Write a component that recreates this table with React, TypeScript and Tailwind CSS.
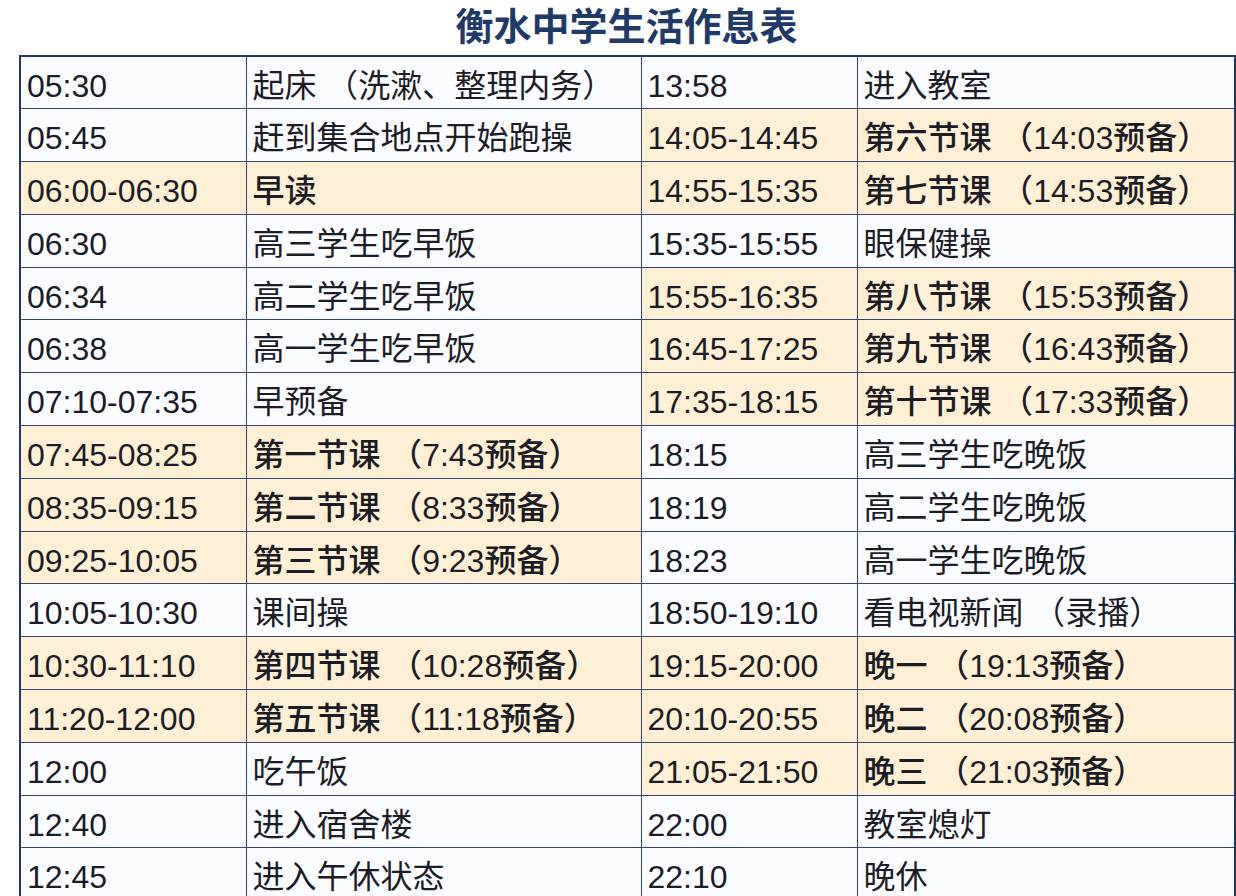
import React from "react";

type Row = { t: string; d: string; h?: boolean };

const left: Row[] = [
  { t: "05:30", d: "起床（洗漱、整理内务）" },
  { t: "05:45", d: "赶到集合地点开始跑操" },
  { t: "06:00-06:30", d: "早读", h: true },
  { t: "06:30", d: "高三学生吃早饭" },
  { t: "06:34", d: "高二学生吃早饭" },
  { t: "06:38", d: "高一学生吃早饭" },
  { t: "07:10-07:35", d: "早预备" },
  { t: "07:45-08:25", d: "第一节课（7:43预备）", h: true },
  { t: "08:35-09:15", d: "第二节课（8:33预备）", h: true },
  { t: "09:25-10:05", d: "第三节课（9:23预备）", h: true },
  { t: "10:05-10:30", d: "课间操" },
  { t: "10:30-11:10", d: "第四节课（10:28预备）", h: true },
  { t: "11:20-12:00", d: "第五节课（11:18预备）", h: true },
  { t: "12:00", d: "吃午饭" },
  { t: "12:40", d: "进入宿舍楼" },
  { t: "12:45", d: "进入午休状态" },
];

const right: Row[] = [
  { t: "13:58", d: "进入教室" },
  { t: "14:05-14:45", d: "第六节课（14:03预备）", h: true },
  { t: "14:55-15:35", d: "第七节课（14:53预备）", h: true },
  { t: "15:35-15:55", d: "眼保健操" },
  { t: "15:55-16:35", d: "第八节课（15:53预备）", h: true },
  { t: "16:45-17:25", d: "第九节课（16:43预备）", h: true },
  { t: "17:35-18:15", d: "第十节课（17:33预备）", h: true },
  { t: "18:15", d: "高三学生吃晚饭" },
  { t: "18:19", d: "高二学生吃晚饭" },
  { t: "18:23", d: "高一学生吃晚饭" },
  { t: "18:50-19:10", d: "看电视新闻（录播）" },
  { t: "19:15-20:00", d: "晚一（19:13预备）", h: true },
  { t: "20:10-20:55", d: "晚二（20:08预备）", h: true },
  { t: "21:05-21:50", d: "晚三（21:03预备）", h: true },
  { t: "22:00", d: "教室熄灯" },
  { t: "22:10", d: "晚休" },
];

const font = {
  fontFamily: '"Liberation Sans", "Noto Sans CJK SC", sans-serif',
};

function Text({ s }: { s: string }) {
  const parts = s.split(/([（])/);
  return (
    <>
      {parts.map((p, i) =>
        p === "（" ? (
          <span key={i} className="pl-[0.3em]">（</span>
        ) : (
          <React.Fragment key={i}>{p}</React.Fragment>
        )
      )}
    </>
  );
}

function Cell({ children, h, bold, w }: { children: React.ReactNode; h?: boolean; bold?: boolean; w: string }) {
  return (
    <td
      className={`${w} ${h ? "bg-[#fdf0d4]" : "bg-[#fbfcff]"} ${bold ? "font-medium" : "font-normal"} border-[1.5px] border-[#34466f] pl-[6px] pt-[6px] align-middle text-[32px] leading-none text-[#1c1c26] whitespace-nowrap`}
    >
      {children}
    </td>
  );
}

export default function App() {
  return (
    <div className="w-[1236px] h-[896px] overflow-hidden bg-white" style={font}>
      <div className="pl-[19px]">
        <div
          className="w-[1215px] h-[55px] pt-[2px] text-center text-[38px] font-bold text-[#1f3a68] leading-[44px]"
          style={{ fontFamily: '"Noto Sans CJK SC", sans-serif' }}
        >
          衡水中学生活作息表
        </div>
        <table className="w-[1215px] table-fixed border-collapse border-[2.5px] border-[#22366a]">
          <tbody>
            {left.map((l, i) => {
              const r = right[i];
              return (
                <tr key={i} className="h-[52.8px]">
                  <Cell w="w-[226px]" h={l.h}>{l.t}</Cell>
                  <Cell w="w-[395px]" h={l.h} bold={l.h}><Text s={l.d} /></Cell>
                  <Cell w="w-[216px]" h={r.h}>{r.t}</Cell>
                  <Cell w="w-[378px]" h={r.h} bold={r.h}><Text s={r.d} /></Cell>
                </tr>
              );
            })}
          </tbody>
        </table>
      </div>
    </div>
  );
}
